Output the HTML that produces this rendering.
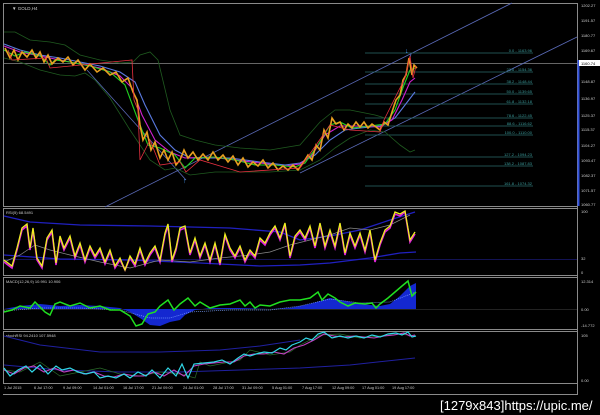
<!DOCTYPE html>
<html><head><meta charset="utf-8"><style>
html,body{margin:0;padding:0;background:#000;width:600px;height:415px;overflow:hidden}
svg{display:block}
text{font-family:"Liberation Sans",sans-serif}
</style></head><body>
<svg width="600" height="415" viewBox="0 0 600 415" xmlns="http://www.w3.org/2000/svg">
<rect width="600" height="415" fill="#000"/>
<!-- frames -->
<g fill="none" stroke="#8a8a8a" stroke-width="1">
<rect x="3.5" y="3.5" width="574" height="203"/>
<rect x="3.5" y="208.5" width="574" height="67"/>
<rect x="3.5" y="277.5" width="574" height="52"/>
<rect x="3.5" y="331.5" width="574" height="52"/>
<line x1="3" y1="394.5" x2="578" y2="394.5"/>
<line x1="577.5" y1="3" x2="577.5" y2="394"/>
</g>
<line x1="578.5" y1="60" x2="578.5" y2="206" stroke="#3050e0" stroke-width="2"/>
<!-- main chart -->
<text x="12" y="10" font-size="4.5" fill="#ccc">▼ GOLD,H4</text>
<line x1="4" y1="63.5" x2="577" y2="63.5" stroke="#888" stroke-width="0.8"/>
<!-- channel lines -->
<g stroke="#5a6ab8" stroke-width="0.8" fill="none">
<line x1="105" y1="207" x2="512" y2="3"/>
<line x1="300" y1="173" x2="577" y2="37"/>
<line x1="87" y1="70" x2="186" y2="180"/>
<line x1="400" y1="95" x2="411" y2="54"/>
</g>
<!-- fib levels -->
<g stroke="#2a6a6a" stroke-width="0.8">
<line x1="365" y1="53" x2="533" y2="53"/><line x1="365" y1="72" x2="533" y2="72"/>
<line x1="365" y1="84" x2="533" y2="84"/><line x1="365" y1="94" x2="533" y2="94"/>
<line x1="365" y1="104" x2="533" y2="104"/><line x1="365" y1="118" x2="533" y2="118"/>
<line x1="365" y1="126" x2="533" y2="126"/><line x1="365" y1="135" x2="533" y2="135"/>
<line x1="365" y1="157" x2="533" y2="157"/><line x1="365" y1="166" x2="533" y2="166"/>
<line x1="365" y1="186" x2="533" y2="186"/>
</g>
<g font-size="4" fill="#3a9a9a" text-anchor="end">
<text x="532" y="52">0.0 - 1163.96</text><text x="532" y="71">23.6 - 1154.36</text>
<text x="532" y="83">38.2 - 1148.44</text><text x="532" y="93">50.0 - 1139.65</text>
<text x="532" y="103">61.8 - 1132.18</text><text x="532" y="117">78.6 - 1122.45</text>
<text x="532" y="125">88.6 - 1116.62</text><text x="532" y="134">100.0 - 1110.00</text>
<text x="532" y="156">127.2 - 1094.23</text><text x="532" y="165">138.2 - 1087.83</text>
<text x="532" y="185">161.8 - 1074.32</text>
</g>
<!-- bollinger -->
<g stroke="#1f5a1f" stroke-width="0.8" fill="none">
<polyline points="4,32 15,32 30,40 50,42 65,45 80,55 100,60 120,63 133,62 140,55 150,52 158,60 170,110 180,135 195,140 215,145 240,148 270,150 300,145 320,122 335,110 350,110 375,115 385,118"/>
<polyline points="4,58 20,62 40,70 60,75 75,76 85,73 95,80 110,98 130,130 150,160 165,170 175,168 190,175 215,172 240,172 270,172 300,170 320,160 335,148 350,138 370,130 385,132 400,145 410,152 415,150"/>
</g>
<!-- MAs -->
<g fill="none" stroke-width="1.1">
<polyline stroke="#5a7ae0" points="4,44 20,50 40,55 60,58 80,62 100,66 120,72 135,82 145,105 160,135 175,150 190,158 210,158 230,158 260,162 285,165 300,163 315,155 330,140 345,130 360,128 380,126 395,118 405,105 415,92"/>
<polyline stroke="#d020d0" points="4,46 20,52 40,56 60,60 80,64 100,68 120,76 132,88 142,115 155,140 170,152 185,158 210,157 235,160 260,163 285,166 300,164 312,155 325,135 340,126 355,126 380,127 392,120 402,100 410,82 415,78"/>
<polyline stroke="#20d020" points="4,50 15,56 25,52 40,56 50,65 55,60 70,62 90,66 110,72 125,85 138,120 148,145 160,148 175,155 185,168 195,158 215,157 235,160 255,165 275,165 295,167 305,163 318,145 330,125 340,122 352,128 370,126 385,124 395,110 404,85 410,70 415,68"/>
</g>
<!-- candles (approximate) -->
<polyline fill="none" stroke="#e8a020" stroke-width="1.6" points="5,48 10,58 14,50 18,60 22,52 27,57 32,50 36,58 40,52 44,62 48,55 52,64 58,58 63,62 68,57 73,65 78,60 85,70 90,64 97,72 103,68 110,75 116,72 122,82 128,78 133,92 137,100 140,125 143,140 147,132 151,150 155,142 160,158 164,150 168,160 172,152 176,165 180,160 184,150 188,158 193,152 198,160 203,154 208,160 213,152 218,160 223,155 228,162 233,156 238,165 243,158 248,167 253,162 258,166 263,160 268,168 273,163 278,170 283,166 288,170 293,165 298,170 303,163 308,155 312,160 316,145 320,150 324,130 328,138 332,118 336,124 340,122 344,130 348,124 352,128 356,122 360,127 364,122 368,128 372,124 376,127 380,130 384,122 388,125 392,112 396,100 400,95 403,80 406,75 409,58 412,75 414,65 417,68"/>
<polyline fill="none" stroke="#e83040" stroke-width="0.8" points="8,50 12,60 46,58 50,68 132,60 134,100 138,110 140,160 150,140 160,165 180,162 186,172 200,160 240,172 300,168 330,125 350,130 380,132 384,120 405,78 410,56 413,78 416,66"/>
<text x="183" y="183" font-size="7" fill="#4aa0ff">↑</text>
<text x="405" y="53" font-size="7" fill="#4aa0ff">↓</text>
<!-- price axis -->
<g font-size="4" fill="#ccc">
<text x="581" y="7">1202.27</text><text x="581" y="22">1191.57</text><text x="581" y="37">1180.77</text>
<text x="581" y="52">1169.67</text><text x="581" y="83">1148.87</text><text x="581" y="100">1136.97</text>
<text x="581" y="117">1125.37</text><text x="581" y="131">1115.37</text><text x="581" y="147">1104.27</text>
<text x="581" y="162">1093.47</text><text x="581" y="177">1082.37</text><text x="581" y="192">1071.57</text>
<text x="581" y="206">1060.77</text>
</g>
<rect x="579" y="60" width="21" height="6" fill="#fff"/>
<text x="581" y="65" font-size="4" fill="#000">1160.74</text>
<!-- RSI -->
<text x="6" y="214" font-size="4" fill="#ccc">RSI(5) 68.5491</text>
<g font-size="4" fill="#ccc"><text x="581" y="213">100</text><text x="581" y="260">32</text><text x="581" y="274">0</text></g>
<line x1="4" y1="259.5" x2="577" y2="259.5" stroke="#1a1a70" stroke-width="0.8"/>
<polyline fill="none" stroke="#2020c0" stroke-width="1.3" points="4,216 30,222 80,225 150,226 230,228 280,232 300,240 330,236 360,230 390,220 415,212"/>
<polyline fill="none" stroke="#2020c0" stroke-width="1.3" points="4,255 60,259 130,260 200,263 260,266 300,265 330,263 370,258 400,253 416,252"/>
<polyline fill="none" stroke="#888" stroke-width="0.7" points="4,262 20,255 35,245 50,250 70,255 100,262 130,268 160,260 190,262 220,258 250,255 270,252 290,245 310,240 330,235 350,228 370,230 390,225 410,215"/>
<polyline fill="none" stroke="#e020e0" stroke-width="1.6" points="4,262 12,268 17,250 22,230 27,226 30,250 33,230 37,260 42,268 47,240 52,232 56,265 60,238 64,250 70,238 75,258 80,245 85,262 90,248 95,258 100,250 105,264 110,252 115,268 120,260 125,270 130,258 135,266 140,250 145,265 150,255 155,248 160,262 165,235 168,226 172,262 176,250 180,230 185,228 190,255 195,240 200,258 205,245 210,262 215,245 220,265 225,236 230,250 235,258 240,248 245,262 250,252 255,258 260,240 265,245 270,235 275,228 280,240 285,225 290,258 295,238 300,232 305,240 310,228 315,248 320,225 325,248 330,232 335,248 340,225 345,255 350,235 355,248 360,235 365,252 370,232 375,262 380,245 385,232 390,228 395,214 400,216 405,212 410,242 415,234"/>
<polyline fill="none" stroke="#f0f020" stroke-width="1.3" points="4,260 12,266 17,248 22,228 27,224 30,248 33,228 37,258 42,266 47,238 52,230 56,263 60,236 64,248 70,236 75,256 80,243 85,260 90,246 95,256 100,248 105,262 110,250 115,266 120,258 125,270 130,256 135,264 140,248 145,263 150,253 155,246 160,260 165,233 168,224 172,260 176,248 180,228 185,226 190,253 195,238 200,256 205,243 210,260 215,243 220,263 225,234 230,248 235,256 240,246 245,260 250,250 255,256 260,238 265,243 270,233 275,226 280,238 285,223 290,256 295,236 300,230 305,238 310,226 315,246 320,223 325,246 330,230 335,246 340,223 345,253 350,233 355,246 360,233 365,250 370,230 375,260 380,243 385,230 390,226 395,212 400,214 405,211 410,240 415,232"/>
<!-- MACD -->
<text x="6" y="283" font-size="4" fill="#ccc">MACD(12,26,9) 10.991 10.906</text>
<g font-size="4" fill="#ccc"><text x="581" y="283">12.314</text><text x="581" y="311">0.00</text><text x="581" y="327">-14.772</text></g>
<line x1="4" y1="309.5" x2="577" y2="309.5" stroke="#444" stroke-width="0.6"/>
<polygon fill="#1428d0" points="4,309 20,306 40,304 60,306 80,305 100,306 120,308 130,312 140,318 150,325 160,326 170,322 180,320 185,315 195,310 210,308 240,308 270,309 290,308 310,304 330,298 340,300 360,304 380,306 390,304 400,296 410,286 416,283 416,309 4,309"/>
<polyline fill="none" stroke="#7aa0ff" stroke-width="0.7" stroke-dasharray="1,1" points="4,311 40,308 80,308 120,310 150,318 170,318 190,312 230,310 270,310 300,306 330,299 360,303 390,302 416,292"/>
<polyline fill="none" stroke="#20e020" stroke-width="1.5" points="4,312 12,310 20,306 30,308 35,302 45,312 50,315 55,304 60,302 70,306 80,303 90,308 100,306 110,310 120,310 130,316 136,326 142,324 148,314 155,312 160,306 168,300 174,310 180,304 188,298 195,306 200,302 210,308 220,305 230,304 240,300 245,306 250,302 255,308 260,305 270,306 280,302 290,300 300,300 310,298 318,292 322,300 328,294 335,298 340,302 348,306 355,303 365,304 372,303 376,308 380,304 388,298 395,292 402,286 408,281 412,296 416,292"/>
<!-- stochRSI -->
<text x="6" y="337" font-size="4" fill="#ccc">stochRSI 94.2410 107.5948</text>
<g font-size="4" fill="#ccc"><text x="581" y="337">105</text><text x="581" y="382">0.00</text></g>
<polyline fill="none" stroke="#2020a0" stroke-width="1" points="4,336 40,345 100,352 160,352 220,350 260,346 300,340"/>
<polyline fill="none" stroke="#2020a0" stroke-width="1" points="4,365 60,370 120,372 180,372 240,370 300,368 350,365 415,358"/>
<polyline fill="none" stroke="#2a6a2a" stroke-width="0.7" points="4,370 20,372 40,362 60,376 80,372 100,368 120,374 140,376 160,372 180,374 195,378 200,362 210,366 240,360 250,350 270,355 290,352 300,345 320,335 340,334 360,338 380,336 400,334 415,336"/>
<polyline fill="none" stroke="#c040c0" stroke-width="1.1" points="4,370 14,374 24,368 34,366 44,372 54,368 64,372 74,370 84,374 94,372 104,376 114,377 124,374 134,376 144,376 154,372 164,376 174,370 184,376 194,366 204,364 214,363 224,362 234,362 244,356 254,354 264,354 274,352 284,354 294,348 304,345 314,340 324,334 334,336 344,337 354,336 364,337 374,338 384,336 394,335 404,333 410,336 415,335"/>
<polyline fill="none" stroke="#30d8e8" stroke-width="1.2" points="4,368 10,376 18,370 26,366 32,372 40,365 48,374 56,366 62,370 70,368 78,372 86,374 94,372 100,378 108,376 116,378 124,374 130,378 138,372 146,376 152,370 160,378 168,368 176,376 182,364 188,378 194,364 204,363 214,362 222,360 230,364 238,358 244,354 250,356 256,354 264,352 272,353 280,348 286,350 292,345 300,342 306,338 312,340 318,334 324,332 332,338 340,336 348,338 356,336 364,338 372,335 380,337 388,334 396,333 402,335 408,332 412,337 416,336"/>
<!-- time axis -->
<g font-size="3.8" fill="#ccc">
<text x="4" y="389">1 Jul 2015</text><text x="34" y="389">6 Jul 17:00</text><text x="63" y="389">9 Jul 09:00</text>
<text x="93" y="389">14 Jul 01:00</text><text x="123" y="389">16 Jul 17:00</text><text x="152" y="389">21 Jul 09:00</text>
<text x="183" y="389">24 Jul 01:00</text><text x="213" y="389">28 Jul 17:00</text><text x="242" y="389">31 Jul 09:00</text>
<text x="272" y="389">5 Aug 01:00</text><text x="302" y="389">7 Aug 17:00</text><text x="332" y="389">12 Aug 09:00</text>
<text x="362" y="389">17 Aug 01:00</text><text x="392" y="389">19 Aug 17:00</text>
</g>
<text x="440" y="410" font-size="13" fill="#fff" font-family="Liberation Sans, sans-serif">[1279x843]https://upic.me/</text>
</svg>
</body></html>
